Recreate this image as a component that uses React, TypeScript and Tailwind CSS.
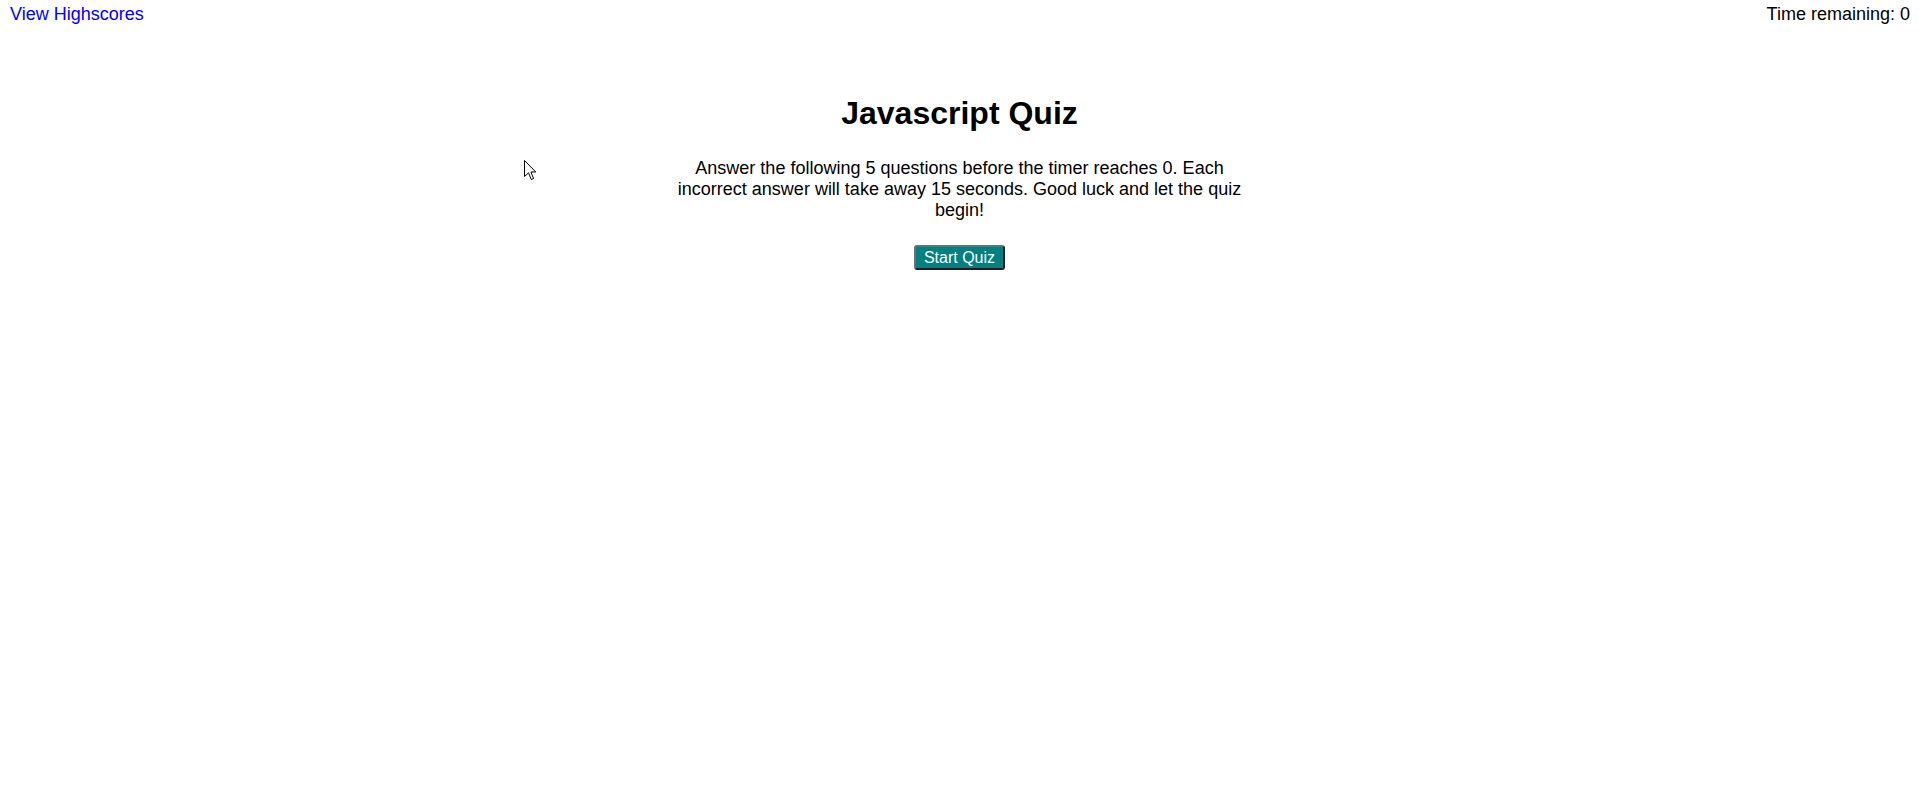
import { useState } from 'react';

const QUESTION_COUNT = 5;
const PENALTY_SECONDS = 15;

function Cursor() {
  return (
    <svg
      className="pointer-events-none absolute left-[524px] top-[160px]"
      width="13"
      height="21"
      viewBox="0 0 13 21"
    >
      <path
        d="M0.5 0.5 L0.5 16.5 L4.5 12.8 L7.3 19.5 L9.6 18.5 L6.9 12 L11.8 12 Z"
        fill="#fff"
        stroke="#000"
        strokeWidth="1"
        strokeLinejoin="miter"
      />
    </svg>
  );
}

export default function App() {
  const [timeLeft] = useState(0);

  return (
    <div className="relative min-h-screen bg-white text-black font-['Liberation_Sans',Arial,sans-serif]">
      <header className="flex items-start justify-between pl-[10px] pr-[9px] pt-[4px] text-[18px] leading-[20px]">
        <a href="#" className="text-[#0000ff]">
          View Highscores
        </a>
        <div>Time remaining: {timeLeft}</div>
      </header>

      <main className="flex flex-col items-center">
        <h1 className="mt-[71px] text-[32px] leading-[37px] font-bold">
          Javascript Quiz
        </h1>
        <p className="mt-[26px] w-[590px] text-center text-[18px] leading-[21px]">
          Answer the following {QUESTION_COUNT} questions before the timer
          reaches 0. Each incorrect answer will take away {PENALTY_SECONDS}{' '}
          seconds. Good luck and let the quiz begin!
        </p>
        <button
          type="button"
          className="mt-[24px] flex h-[25px] w-[91px] items-center justify-center rounded-[3px] border-2 border-t-[#6f6f6f] border-l-[#6f6f6f] border-r-[#1e1e1e] border-b-[#1e1e1e] bg-[#008080] text-[16px] leading-[18px] text-white"
        >
          Start Quiz
        </button>
      </main>

      <Cursor />
    </div>
  );
}
